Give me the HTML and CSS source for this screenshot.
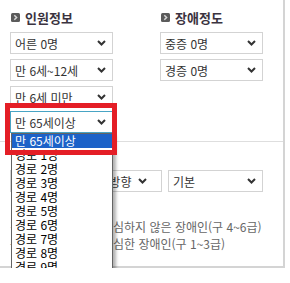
FILE: index.html
```html
<!DOCTYPE html>
<html lang="ko">
<head>
    <meta charset="UTF-8">
    <meta name="viewport" content="width=device-width, initial-scale=1.0">
    <title>경로 옵션</title>
    <link rel="stylesheet" href="styles.css">
</head>
<body>
    <div class="panel">
        <div class="cols">
            <div class="col">
                <h3 class="tit"><svg class="ico" width="9" height="9" viewBox="0 0 9 9"><rect width="9" height="9" rx="1.5" fill="#5b5b5b"/><path d="M3.3 2.2 L5.6 4.5 L3.3 6.8" fill="none" stroke="#d8d8d8" stroke-width="1.5"/></svg>인원정보</h3>
                <div class="sel">
                    <select><option>어른 0명</option></select>
                    <svg class="arr" width="9" height="6" viewBox="0 0 9 6"><path d="M1 1 L4.5 4.5 L8 1" fill="none" stroke="#333" stroke-width="2"/></svg>
                </div>
                <div class="sel">
                    <select><option>만 6세~12세</option></select>
                    <svg class="arr" width="9" height="6" viewBox="0 0 9 6"><path d="M1 1 L4.5 4.5 L8 1" fill="none" stroke="#333" stroke-width="2"/></svg>
                </div>
                <div class="sel">
                    <select><option>만 6세 미만</option></select>
                    <svg class="arr" width="9" height="6" viewBox="0 0 9 6"><path d="M1 1 L4.5 4.5 L8 1" fill="none" stroke="#333" stroke-width="2"/></svg>
                </div>
                <div class="sel open">
                    <select><option>만 65세이상</option></select>
                    <svg class="arr" width="9" height="6" viewBox="0 0 9 6"><path d="M1 1 L4.5 4.5 L8 1" fill="none" stroke="#333" stroke-width="2"/></svg>
                    <ul class="list">
                        <li class="on">만 65세이상</li>
                        <li>경로 1명</li>
                        <li>경로 2명</li>
                        <li>경로 3명</li>
                        <li>경로 4명</li>
                        <li>경로 5명</li>
                        <li>경로 6명</li>
                        <li>경로 7명</li>
                        <li>경로 8명</li>
                        <li>경로 9명</li>
                    </ul>
                    <div class="mark"></div>
                </div>
            </div>
            <div class="col">
                <h3 class="tit"><svg class="ico" width="9" height="9" viewBox="0 0 9 9"><rect width="9" height="9" rx="1.5" fill="#5b5b5b"/><path d="M3.3 2.2 L5.6 4.5 L3.3 6.8" fill="none" stroke="#d8d8d8" stroke-width="1.5"/></svg>장애정도</h3>
                <div class="sel">
                    <select><option>중증 0명</option></select>
                    <svg class="arr" width="9" height="6" viewBox="0 0 9 6"><path d="M1 1 L4.5 4.5 L8 1" fill="none" stroke="#333" stroke-width="2"/></svg>
                </div>
                <div class="sel">
                    <select><option>경증 0명</option></select>
                    <svg class="arr" width="9" height="6" viewBox="0 0 9 6"><path d="M1 1 L4.5 4.5 L8 1" fill="none" stroke="#333" stroke-width="2"/></svg>
                </div>
            </div>
        </div>

        <div class="opt">
            <h3 class="tit"><svg class="ico" width="9" height="9" viewBox="0 0 9 9"><rect width="9" height="9" rx="1.5" fill="#5b5b5b"/><path d="M3.3 2.2 L5.6 4.5 L3.3 6.8" fill="none" stroke="#d8d8d8" stroke-width="1.5"/></svg>경로옵션</h3>
            <div class="row">
                <div class="sel wide">
                    <select><option>출발지 기준 진행 방향</option></select>
                    <svg class="arr" width="9" height="6" viewBox="0 0 9 6"><path d="M1 1 L4.5 4.5 L8 1" fill="none" stroke="#333" stroke-width="2"/></svg>
                </div>
                <div class="sel mid">
                    <select><option>기본</option></select>
                    <svg class="arr" width="9" height="6" viewBox="0 0 9 6"><path d="M1 1 L4.5 4.5 L8 1" fill="none" stroke="#333" stroke-width="2"/></svg>
                </div>
            </div>
            <p class="note"><span class="lbl">경증 :</span>심하지 않은 장애인(구 4~6급)</p>
            <p class="note"><span class="lbl">중증 :</span>심한 장애인(구 1~3급)</p>
        </div>
    </div>
</body>
</html>
```

FILE: styles.css
```css
body {
    margin: 0;
    background-color: #fff;
    font-family: "Noto Sans CJK KR", sans-serif;
    font-size: 12px;
    color: #333;
}

.panel {
    width: 283px;
    height: 266px;
    border-right: 2px solid #d4d4d4;
    border-bottom: 2px solid #d4d4d4;
}

.cols {
    display: grid;
    grid-template-columns: 150px 1fr;
    padding: 10px 0 8px 10px;
}

.tit {
    display: flex;
    align-items: center;
    gap: 5px;
    margin: 0 0 8px 0;
    padding-left: 1px;
    height: 14px;
    font-size: 13px;
    font-weight: bold;
    color: #3b3340;
}

.sel {
    position: relative;
    width: 103px;
    height: 22px;
    margin-bottom: 5px;
}

.sel:last-child {
    margin-bottom: 0;
}

.sel select {
    appearance: none;
    -webkit-appearance: none;
    box-sizing: border-box;
    width: 100%;
    height: 100%;
    margin: 0;
    padding: 0 4px;
    border: 1px solid #d3d3d3;
    border-radius: 0;
    background: #fff;
    font-family: inherit;
    font-size: 12px;
    color: #333;
    outline: none;
}

.sel .arr {
    position: absolute;
    right: 7px;
    top: 8px;
    pointer-events: none;
}

/* opened select sits a little higher than the others */
.sel.open {
    margin-top: -2px;
}

.open select {
    border-color: #48a4c4;
}

.list {
    position: absolute;
    top: 100%;
    left: 1px;
    z-index: 2;
    width: 100px;
    margin: 0;
    padding: 0;
    list-style: none;
    background-color: #fff;
    border: 1px solid #646464;
    box-shadow: 3px 3px 3px rgba(0, 0, 0, 0.3);
    font-size: 12px;
    color: #000;
}

.list li {
    height: 14px;
    line-height: 14px;
    padding-left: 3px;
}

.list li.on {
    background-color: #1c62c8;
    color: #fff;
}

.mark {
    position: absolute;
    left: -5px;
    right: -4px;
    top: -8px;
    bottom: -22px;
    z-index: 3;
    border: 5px solid #e41e26;
    pointer-events: none;
}

.opt {
    border-top: 1px solid #dedede;
    padding: 8px 0 0 10px;
}

.opt .tit {
    margin-bottom: 6px;
}

.row {
    display: flex;
    gap: 6px;
}

.sel.wide {
    width: 152px;
}

.sel.wide select {
    padding-left: 11px;
}

.sel.wide .arr {
    right: 15px;
}

.sel.mid {
    width: 95px;
}

.note {
    display: flex;
    margin: 0;
    line-height: 17px;
    color: #666;
}

.note:first-of-type {
    margin-top: 21px;
}

.lbl {
    width: 103px;
    flex-shrink: 0;
}
```
